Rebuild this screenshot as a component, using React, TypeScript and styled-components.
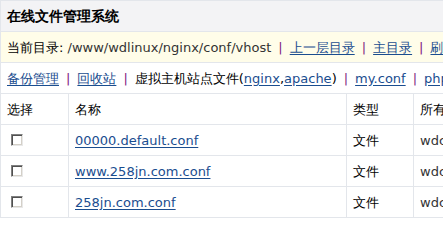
import styled, { createGlobalStyle } from "styled-components";

const GlobalStyle = createGlobalStyle`
  html, body {
    margin: 0;
    padding: 0;
    background: #fff;
    overflow: hidden;
  }
  body {
    font-family: "DejaVu Sans", sans-serif;
    font-size: 13px;
    color: #000;
  }
`;

const Wrapper = styled.div`
  width: 560px;
  border-left: 1px solid #e3e6eb;
  border-top: 1px solid #e3e6eb;
`;

const TitleBar = styled.div`
  height: 30px;
  display: flex;
  align-items: center;
  padding-left: 6px;
  background: #f3f3f5;
  border-bottom: 1px solid #e3e6eb;
  font-size: 14px;
  font-weight: bold;
  line-height: 1;
`;

const Bar = styled.div<{ $tint?: boolean }>`
  height: 30px;
  display: flex;
  align-items: center;
  padding-left: 6px;
  white-space: pre;
  line-height: 1;
  background: ${(p) => (p.$tint ? "#fffde9" : "#fff")};
  border-bottom: ${(p) => (p.$tint ? "1px solid #e3e6eb" : "none")};
`;

const Path = styled.span`
  color: #333;
`;

const Link = styled.a`
  color: #1a4d8f;
  text-decoration: underline;
  text-underline-offset: 2px;
  cursor: pointer;
`;

const Sep = styled.span`
  color: #80177f;
  margin: 0 7px;
`;

const Table = styled.table`
  border-collapse: collapse;
  table-layout: fixed;
  width: 560px;
  margin-left: -1px;
  font-size: 13px;
`;

const Cell = styled.td<{ $muted?: boolean }>`
  height: 30px;
  padding: 0 0 0 6px;
  border: 1px solid #e3e6eb;
  white-space: nowrap;
  overflow: hidden;
  line-height: 1;
  color: ${(p) => (p.$muted ? "#333" : "#000")};
`;

const HeadCell = styled(Cell).attrs({ as: "th" })`
  font-weight: normal;
  text-align: left;
`;

const Check = styled.span`
  display: block;
  box-sizing: border-box;
  width: 12px;
  height: 12px;
  margin-left: 4px;
  background: #fff;
  border: 1px solid;
  border-color: #808080 #e8e8e8 #e8e8e8 #808080;
  box-shadow: inset 1px 1px 0 #505050, inset -1px -1px 0 #d4d0c8;
`;

const files = ["00000.default.conf", "www.258jn.com.conf", "258jn.com.conf"];

export default function App() {
  return (
    <>
      <GlobalStyle />
      <Wrapper>
        <TitleBar>在线文件管理系统</TitleBar>
        <Bar $tint>
          {"当前目录: "}
          <Path>/www/wdlinux/nginx/conf/vhost</Path>
          <Sep>|</Sep>
          <Link>上一层目录</Link>
          <Sep>|</Sep>
          <Link>主目录</Link>
          <Sep>|</Sep>
          <Link>刷新</Link>
        </Bar>
        <Bar>
          <Link>备份管理</Link>
          <Sep>|</Sep>
          <Link>回收站</Link>
          <Sep>|</Sep>
          {"虚拟主机站点文件("}
          <Link>nginx</Link>,<Link>apache</Link>)
          <Sep>|</Sep>
          <Link>my.conf</Link>
          <Sep>|</Sep>
          <Link>php.ini</Link>
        </Bar>
        <Table>
          <colgroup>
            <col style={{ width: 68 }} />
            <col style={{ width: 278 }} />
            <col style={{ width: 67 }} />
            <col style={{ width: 147 }} />
          </colgroup>
          <thead>
            <tr>
              <HeadCell>选择</HeadCell>
              <HeadCell>名称</HeadCell>
              <HeadCell>类型</HeadCell>
              <HeadCell>所有者</HeadCell>
            </tr>
          </thead>
          <tbody>
            {files.map((name) => (
              <tr key={name}>
                <Cell>
                  <Check />
                </Cell>
                <Cell>
                  <Link>{name}</Link>
                </Cell>
                <Cell>文件</Cell>
                <Cell $muted>wdcp</Cell>
              </tr>
            ))}
          </tbody>
        </Table>
      </Wrapper>
    </>
  );
}
